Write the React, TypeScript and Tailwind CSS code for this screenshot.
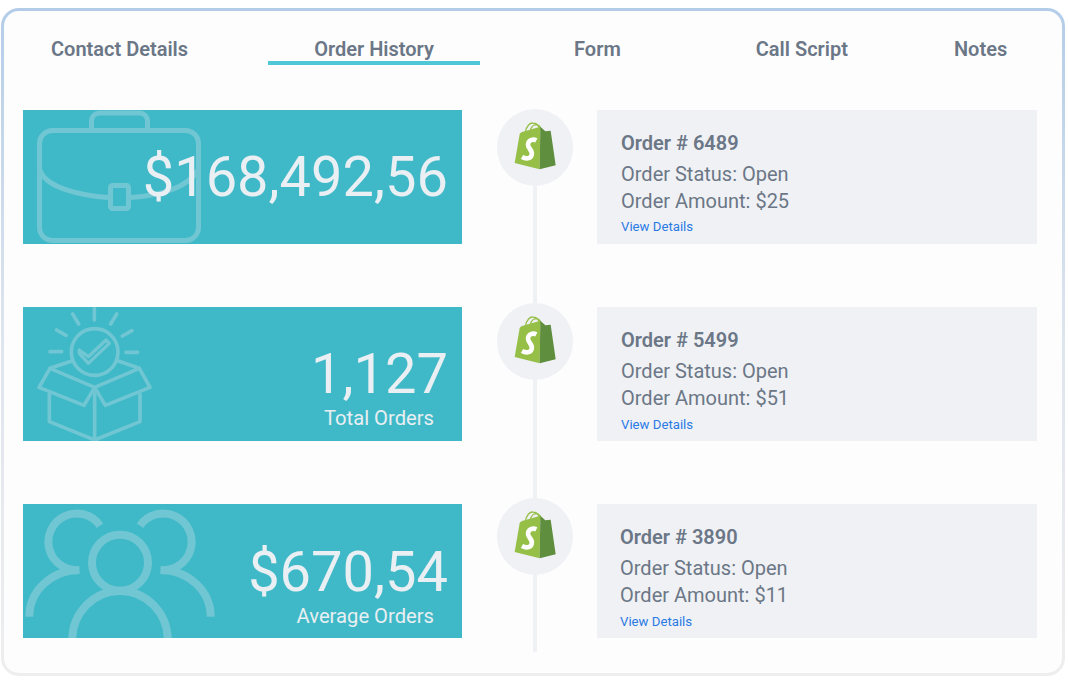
const STROKE = "#70c6d2";

function Briefcase() {
  return (
    <svg className="absolute left-0 top-0" width="439" height="134" viewBox="0 0 439 134" fill="none" stroke={STROKE} strokeWidth="5">
      <rect x="16.5" y="20.5" width="159" height="110" rx="13" />
      <path d="M68.5 19V11a8 8 0 0 1 8-8h40a8 8 0 0 1 8 8v8" />
      <path d="M17 60C22 78 60 86 85 87.5M108 87.5C135 86 165 78 175 60" />
      <rect x="87.5" y="75.5" width="18" height="23" rx="2" />
    </svg>
  );
}

function OpenBox() {
  return (
    <svg className="absolute left-0 top-0" width="439" height="134" viewBox="9 21 1317 402" fill="none" stroke={STROKE} strokeWidth="11" strokeLinecap="round" strokeLinejoin="round">
      <circle cx="224" cy="156" r="70" />
      <path d="M223 25V60M158 42L176 72M110 90L138 106M90 155H125M290 42L272 72M336 92L307 108M318 157H353" />
      <path d="M178 150L205 170L258 120L268 130L205 190L178 160Z" strokeWidth="10" />
      <path d="M155 183L90 205L224 262L358 205L295 183" />
      <path d="M90 205L57 262L192 316L224 262L256 316L390 262L358 205" />
      <path d="M88 282V365L224 420L360 365V282M224 262V420" />
    </svg>
  );
}

function Users() {
  return (
    <svg className="absolute left-0 top-0" width="439" height="134" viewBox="69 27 1317 402" fill="none" stroke={STROKE} strokeWidth="24">
      <circle cx="360" cy="203" r="84" />
      <path d="M217 434A143 146 0 0 1 503 434" />
      <path d="M300 92A85 85 0 1 0 238 225" />
      <path d="M238 225A150 140 0 0 0 88 365" />
      <path d="M420 92A85 85 0 1 1 482 225" />
      <path d="M482 225A150 140 0 0 1 632 365" />
    </svg>
  );
}

function ShopifyBag() {
  return (
    <svg width="76" height="76" viewBox="52 58 228 228" fill="none">
      <path d="M137 126C140 104 152 96 160 97C172 98 180 108 181 122M152 120C155 108 162 102 170 102C178 103 183 110 184 118" stroke="#95bf47" strokeWidth="4" />
      <path d="M105 217L120 131Q121 126 127 124L182 108L180 236Z" fill="#95bf47" />
      <path d="M182 108L197 122L213 120L228 224L180 236Z" fill="#5e8e3e" />
      <path d="M170 149C160 144 146 148 145 161C144 174 160 178 156 193C153 205 138 205 127 199" stroke="#ffffff" strokeWidth="14" />
    </svg>
  );
}

const tabs = [
  { label: "Contact Details", cls: "ml-[47px] border-transparent" },
  { label: "Order History", cls: "ml-[80px] w-[212px] border-[#4fc7d6]" },
  { label: "Form", cls: "ml-[94px] border-transparent" },
  { label: "Call Script", cls: "ml-[135px] border-transparent" },
  { label: "Notes", cls: "ml-[106px] border-transparent" },
];

const rows = [
  { icon: <Briefcase />, value: "$168,492,56", sub: "", order: "6489", amount: "$25", h: "h-[197px]", circle: "-mt-[1px]", pad: "pl-[24px]", link: "mt-[4px]", top: "pt-[33px]" },
  { icon: <OpenBox />, value: "1,127", sub: "Total Orders", order: "5499", amount: "$51", h: "h-[197px]", circle: "-mt-[4px]", pad: "pl-[24px]", link: "mt-[5px]", top: "pt-[33px]" },
  { icon: <Users />, value: "$670,54", sub: "Average Orders", order: "3890", amount: "$11", h: "h-[154px]", circle: "-mt-[6px]", pad: "pl-[23px]", link: "mt-[5px]", top: "pt-[34px]" },
];

export default function App() {
  return (
    <div className="h-[681px] w-[1068px] overflow-hidden bg-white pl-px pt-2 font-['Roboto',sans-serif]">
      <div className="h-[668px] w-[1064px] rounded-[18px] bg-gradient-to-b from-[#b3cde8] via-[#dfe5ee] to-[#eeeeee] p-[3px]">
        <div className="h-full w-full rounded-[15px] bg-[#fdfdfe]">
          <div className="flex pt-[24px] text-[20px] font-semibold leading-[28px] text-[#6b7786]">
            {tabs.map((t) => (
              <div key={t.label} className={`h-[30px] whitespace-nowrap border-b-4 text-center ${t.cls}`}>
                {t.label}
              </div>
            ))}
          </div>
          <div className="mt-[45px] pl-[19px]">
            {rows.map((r) => (
              <div key={r.order} className={`flex items-start ${r.h}`}>
                <div className={`relative flex h-[134px] w-[439px] shrink-0 flex-col items-end overflow-hidden bg-[#3fb9c7] pr-[14px] text-[#e9eff2] ${r.top}`}>
                  {r.icon}
                  <div className="relative text-[56px] font-normal leading-[68px]">{r.value}</div>
                  {r.sub && <div className="relative -mt-[2px] pr-[14px] text-[20.2px] font-normal leading-[24px]">{r.sub}</div>}
                </div>
                <div className={`ml-[35px] flex h-full w-[76px] shrink-0 flex-col items-center ${r.circle}`}>
                  <div className="flex h-[77px] w-[76px] shrink-0 items-center justify-center rounded-full bg-[#f0f1f5]">
                    <ShopifyBag />
                  </div>
                  <div className="w-1 flex-1 bg-[#f0f1f5]" />
                </div>
                <div className={`ml-[24px] h-[134px] w-[440px] shrink-0 bg-[#f0f1f5] pt-[20px] text-[#6b7786] ${r.pad}`}>
                  <div className="text-[20px] font-semibold leading-[27px]">Order # {r.order}</div>
                  <div className="mt-[4px] text-[20px] font-normal leading-[27px]">Order Status: Open</div>
                  <div className="text-[20px] font-normal leading-[27px]">Order Amount: {r.amount}</div>
                  <div className={`text-[13.2px] leading-[16px] text-[#2a7ae4] ${r.link}`}>View Details</div>
                </div>
              </div>
            ))}
          </div>
        </div>
      </div>
    </div>
  );
}
